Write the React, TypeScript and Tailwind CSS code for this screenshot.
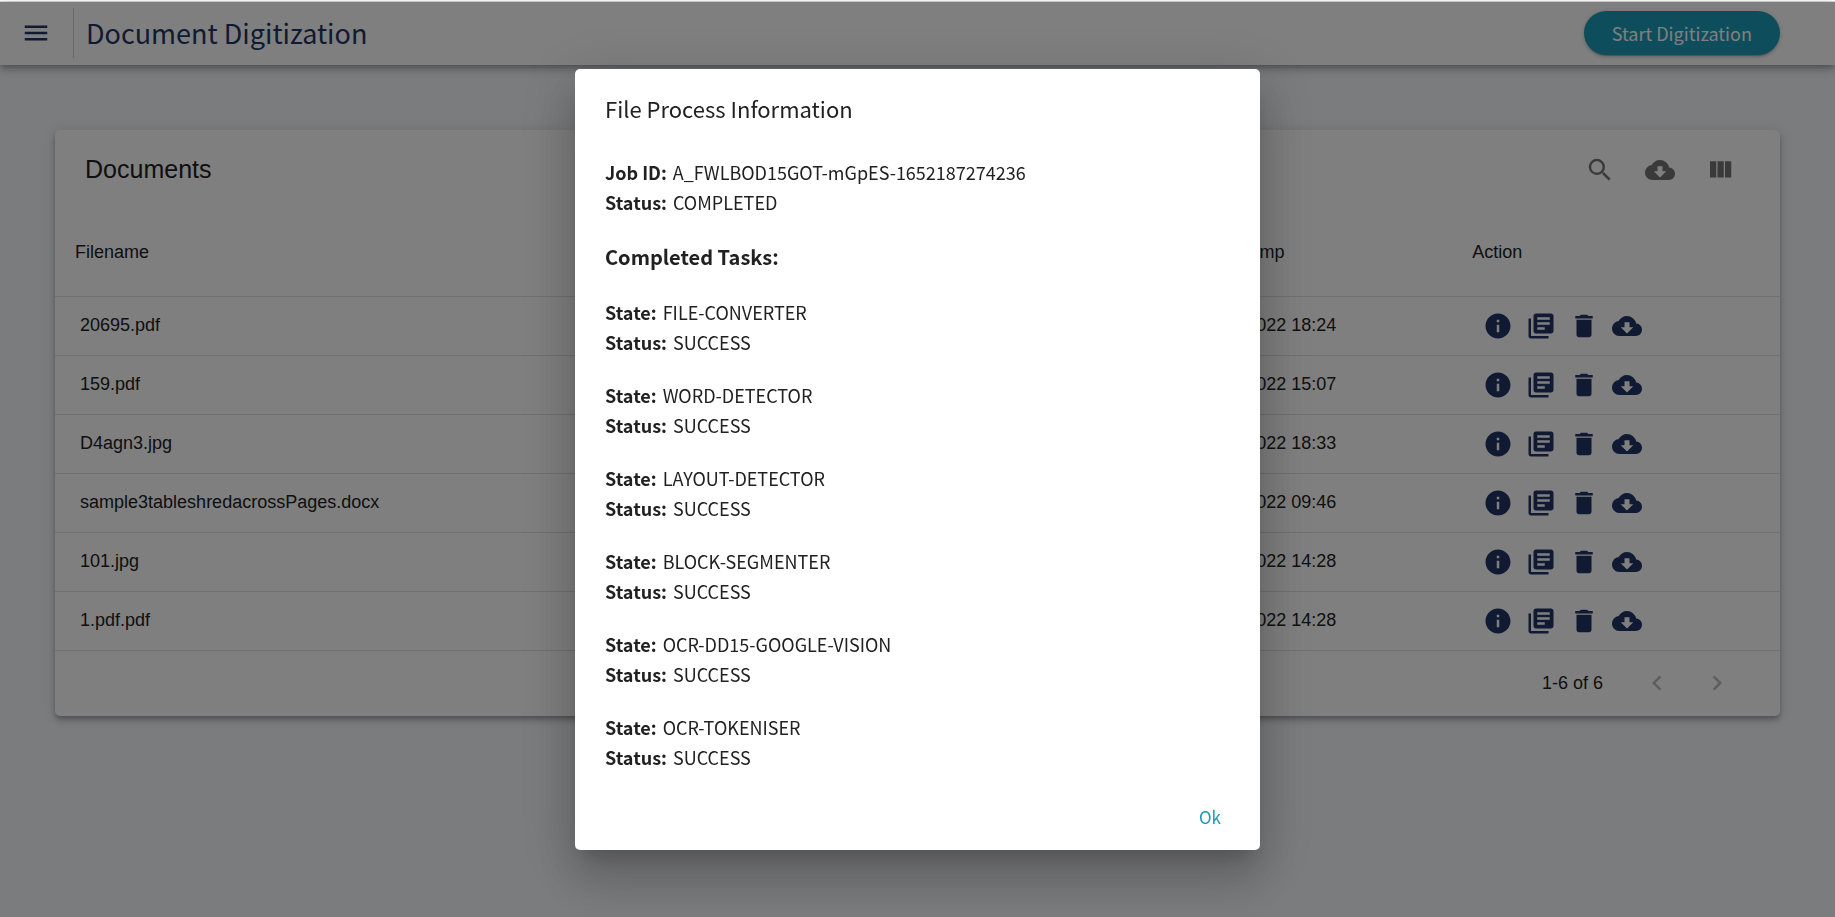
import type { ReactNode } from "react";
import {
  MdCloudDownload,
  MdDelete,
  MdInfo,
  MdKeyboardArrowLeft,
  MdKeyboardArrowRight,
  MdLibraryBooks,
  MdMenu,
  MdSearch,
} from "react-icons/md";

const documents = [
  { name: "20695.pdf", time: "10/05/2022 18:24" },
  { name: "159.pdf", time: "10/05/2022 15:07" },
  { name: "D4agn3.jpg", time: "09/05/2022 18:33" },
  { name: "sample3tableshredacrossPages.docx", time: "09/05/2022 09:46" },
  { name: "101.jpg", time: "06/05/2022 14:28" },
  { name: "1.pdf.pdf", time: "06/05/2022 14:28" },
];

const tasks = [
  "FILE-CONVERTER",
  "WORD-DETECTOR",
  "LAYOUT-DETECTOR",
  "BLOCK-SEGMENTER",
  "OCR-DD15-GOOGLE-VISION",
  "OCR-TOKENISER",
];

function ViewColumnIcon() {
  return (
    <svg viewBox="0 0 24 24" className="size-[30px]" fill="currentColor" aria-hidden="true">
      <path d="M10 18h5V5h-5v13zm-6 0h5V5H4v13zM16 5v13h5V5h-5z" />
    </svg>
  );
}

function IconButton({ label, className, children }: { label: string; className: string; children: ReactNode }) {
  return (
    <button type="button" aria-label={label} className={`flex items-center justify-center ${className}`}>
      {children}
    </button>
  );
}

function Field({ label, value }: { label: string; value: string }) {
  return (
    <p className="flex gap-1.5">
      <strong className="font-bold">{label}:</strong>
      <span>{value}</span>
    </p>
  );
}

function Header() {
  return (
    <header className="relative flex h-[63px] items-center bg-white pr-[3%] pb-px pl-[21px] text-[#233466] shadow-[0_3px_5px_-1px_rgba(0,0,0,0.2),0_5px_8px_0_rgba(0,0,0,0.14),0_1px_14px_0_rgba(0,0,0,0.12)]">
      <IconButton label="Menu" className="size-[30px]">
        <MdMenu className="size-[30px]" />
      </IconButton>
      <div className="ml-[22px] h-[50px] w-px bg-[#d4d4d4]" />
      <h1 className="ml-3 text-[27px]">Document Digitization</h1>
      <button
        type="button"
        className="ml-auto h-11 rounded-full bg-[#1c9ab7] px-7 text-[18px] text-white shadow-[0_3px_1px_-2px_rgba(0,0,0,0.2),0_2px_3px_0_rgba(0,0,0,0.14),0_1px_6px_0_rgba(0,0,0,0.12)]"
      >
        Start Digitization
      </button>
    </header>
  );
}

function DocumentsCard() {
  return (
    <section className="rounded-[5px] bg-white font-['Liberation_Sans',Arial,sans-serif] text-[18px] text-[#212121] shadow-[0_3px_4px_-1px_rgba(0,0,0,0.2),0_5px_6px_0_rgba(0,0,0,0.14),0_1px_13px_0_rgba(0,0,0,0.12)]">
      <div className="flex h-20 items-center justify-between pr-[30px] pl-[30px]">
        <h2 className="text-[25px]">Documents</h2>
        <div className="flex text-[#757575]">
          <IconButton label="Search" className="size-[60px]">
            <MdSearch className="size-[30px]" />
          </IconButton>
          <IconButton label="Download CSV" className="size-[60px]">
            <MdCloudDownload className="size-[30px]" />
          </IconButton>
          <IconButton label="View Columns" className="size-[60px]">
            <ViewColumnIcon />
          </IconButton>
        </div>
      </div>
      <table className="w-full table-fixed border-collapse text-left">
        <thead>
          <tr className="h-[86px] border-b border-[#e0e0e0]">
            <th className="w-[65%] px-5 font-normal">Filename</th>
            <th className="w-[16%] px-5 font-normal">Timestamp</th>
            <th className="w-[19%] px-5 font-normal">Action</th>
          </tr>
        </thead>
        <tbody>
          {documents.map((doc) => (
            <tr key={doc.name} className="h-[59px] border-b border-[#e0e0e0]">
              <td className="px-[25px]">{doc.name}</td>
              <td className="px-5">{doc.time}</td>
              <td className="px-[31px]">
                <div className="flex gap-[13px] text-[#233466]">
                  <IconButton label="View details" className="size-[30px]">
                    <MdInfo className="size-[30px]" />
                  </IconButton>
                  <IconButton label="View document" className="size-[30px]">
                    <MdLibraryBooks className="size-[30px]" />
                  </IconButton>
                  <IconButton label="Delete" className="size-[30px]">
                    <MdDelete className="size-[30px]" />
                  </IconButton>
                  <IconButton label="Download" className="size-[30px]">
                    <MdCloudDownload className="size-[30px]" />
                  </IconButton>
                </div>
              </td>
            </tr>
          ))}
        </tbody>
      </table>
      <div className="flex h-[65px] items-center justify-end pr-[33px]">
        <span className="mr-6">1-6 of 6</span>
        <IconButton label="Previous Page" className="size-[60px] text-[#bdbdbd]">
          <MdKeyboardArrowLeft className="size-[30px]" />
        </IconButton>
        <IconButton label="Next Page" className="size-[60px] text-[#bdbdbd]">
          <MdKeyboardArrowRight className="size-[30px]" />
        </IconButton>
      </div>
    </section>
  );
}

function ProcessDialog() {
  return (
    <div className="fixed inset-x-0 top-[2px] bottom-0 flex items-center justify-center bg-black/50">
      <div
        role="dialog"
        aria-modal="true"
        aria-labelledby="dialog-title"
        className="w-[685px] rounded-[5px] bg-white text-[#212121] shadow-[0_14px_19px_-9px_rgba(0,0,0,0.2),0_30px_48px_4px_rgba(0,0,0,0.14),0_11px_58px_10px_rgba(0,0,0,0.12)]"
      >
        <h2 id="dialog-title" className="px-[30px] pt-[19px] pb-[18px] text-[22px] leading-10">
          File Process Information
        </h2>
        <div className="px-[30px] pt-[11px] text-[18px] leading-[30px]">
          <Field label="Job ID" value="A_FWLBOD15GOT-mGpES-1652187274236" />
          <Field label="Status" value="COMPLETED" />
          <h3 className="mt-[25px] mb-[25px] text-[20px] font-bold">Completed Tasks:</h3>
          <ul className="flex flex-col gap-[23px]">
            {tasks.map((task) => (
              <li key={task}>
                <Field label="State" value={task} />
                <Field label="Status" value="SUCCESS" />
              </li>
            ))}
          </ul>
        </div>
        <div className="flex justify-end px-[10px] pt-[22px] pb-[11px]">
          <button type="button" className="h-[45px] w-20 text-[17px] text-[#1c9ab7]">
            Ok
          </button>
        </div>
      </div>
    </div>
  );
}

export default function App() {
  return (
    <div className="min-h-screen bg-[#f6f8fb] font-['Noto_Sans_CJK_SC',sans-serif]">
      <div className="h-[2px] border-b border-[#d4d8d9] bg-white" />
      <Header />
      <main className="px-[3%] py-[65px]">
        <DocumentsCard />
      </main>
      <ProcessDialog />
    </div>
  );
}
